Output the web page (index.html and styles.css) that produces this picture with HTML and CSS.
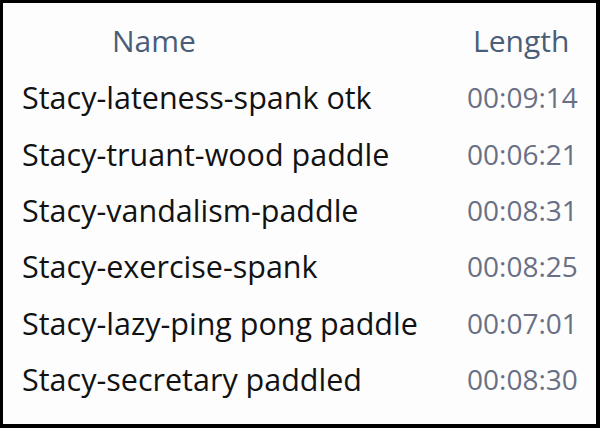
FILE: index.html
```html
<!DOCTYPE html>
<html>
<head>
<meta charset="utf-8">
<link rel="stylesheet" href="styles.css">
</head>
<body>
<div class="frame">
  <div class="list">
    <div class="hdr name-h">Name</div>
    <div class="hdr len-h">Length</div>
    <div class="name">Stacy-lateness-spank otk</div><div class="len">00:09:14</div>
    <div class="name">Stacy-truant-wood paddle</div><div class="len">00:06:21</div>
    <div class="name">Stacy-vandalism-paddle</div><div class="len">00:08:31</div>
    <div class="name">Stacy-exercise-spank</div><div class="len">00:08:25</div>
    <div class="name">Stacy-lazy-ping pong paddle</div><div class="len">00:07:01</div>
    <div class="name">Stacy-secretary paddled</div><div class="len">00:08:30</div>
  </div>
</div>
</body>
</html>
```
FILE: styles.css
```css
html, body { margin: 0; padding: 0; background: #000; }
.frame {
  box-sizing: border-box;
  width: 600px;
  height: 428px;
  border-style: solid;
  border-color: #000;
  border-width: 3px 4px 4px 3px;
  background: #fdfdfd;
  font-family: "Open Sans", "Noto Sans", sans-serif;
  font-size: 30.5px;
}
.list {
  display: grid;
  grid-template-columns: 445px 1fr;
  grid-auto-rows: 56.3px;
  padding: 10px 0 0 19px;
  align-items: center;
}
.hdr { color: #4a5d78; height: 56px; line-height: 56px; font-size: 30px; }
.name-h { padding-left: 90px; }
.len-h { padding-left: 6px; }
.name { color: #121212; }
.len { color: #6a6f84; font-size: 28px; }
```
